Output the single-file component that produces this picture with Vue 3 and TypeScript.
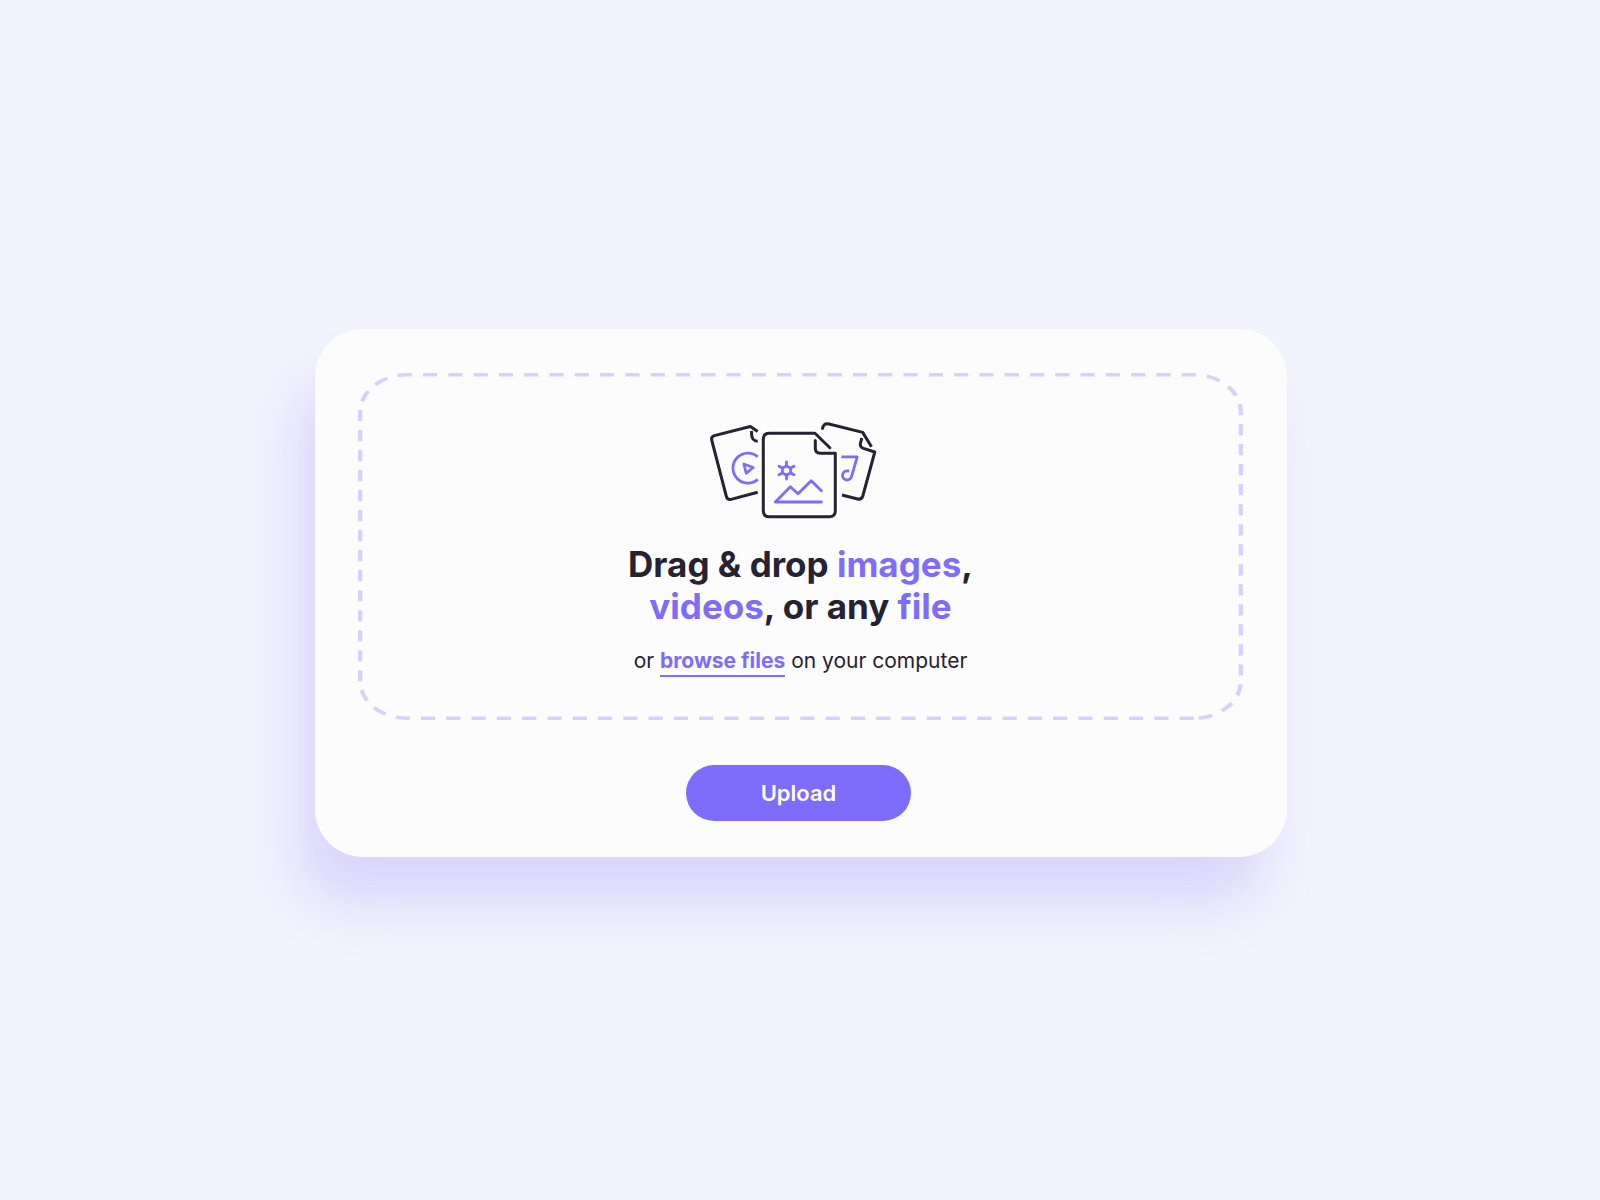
<script setup lang="ts">
import { ref } from 'vue'

const picker = ref<HTMLInputElement | null>(null)
const files = ref<File[]>([])

function browse(): void {
  picker.value?.click()
}

function onPick(event: Event): void {
  files.value = Array.from((event.target as HTMLInputElement).files ?? [])
}

function onDrop(event: DragEvent): void {
  files.value = Array.from(event.dataTransfer?.files ?? [])
}
</script>

<template>
  <main class="page">
    <section class="card">
      <div class="dropzone" @dragover.prevent @drop.prevent="onDrop">
        <svg class="outline" viewBox="0 0 701 347" preserveAspectRatio="none" aria-hidden="true">
          <path
            d="M662 345.3H39A37.3 37.3 0 0 1 1.7 308V39A37.3 37.3 0 0 1 39 1.7H662A37.3 37.3 0 0 1 699.3 39V308A37.3 37.3 0 0 1 662 345.3"
            pathLength="2015"
          />
        </svg>

        <svg class="files" viewBox="1 0 180 100" aria-hidden="true">
          <g class="ink">
            <path d="M47.7 11.4L40.3 6.5L4.4 15.6Q0.9 16.6 1.7 20L16.4 76.6Q17.4 80.2 21 79.4L47.7 72.2" />
            <path d="M41.6 11V14.5Q42 21 47.7 21.2" />
            <path stroke-linecap="round" d="M119.8 27.8L105 13.3H59.3Q53.3 13.3 53.3 19.3V90.7Q53.3 96.7 59.3 96.7H119.3Q125.3 96.7 125.3 90.7V33.3H110.3Q105.3 33.3 105.3 28.3V20.6" />
            <path d="M112.3 9.6Q113.2 2.6 119 4L152.7 12.4L161.5 26.8" />
            <path d="M151.9 18L150.4 23.4Q149.6 27 153.4 28.4L164.8 32L152.8 76Q151.6 79.8 147.6 79L132 75" />
          </g>
          <g class="accent">
            <path stroke-linecap="butt" d="M47.8 36.8A15 15 0 1 0 47.8 59.4" />
            <path d="M33.8 44L43.2 47.5L36.3 53.3Z" />
            <path d="M65.3 82L80.3 66.7L88 73.7L101.2 60.7L111.4 70.8M65.3 82H111.4" />
            <circle cx="76.5" cy="50.5" r="4.2" />
            <path d="M76.5 42V46M76.5 55V59M69 46.2L72.6 48.2M80.4 52.8L84 54.8M69 54.8L72.6 52.8M80.4 48.2L84 46.2" />
            <path stroke-linecap="butt" d="M131.4 36.8H147.2L141.6 56.4A4.6 4.6 0 1 1 137.4 50.8L139.2 51.2" />
          </g>
        </svg>

        <h1 class="title">
          Drag &amp; drop <em>images</em>,<br />
          <em>videos</em>, or any <em>file</em>
        </h1>
        <p class="hint">
          or <a href="#" @click.prevent="browse">browse files</a> on your computer
        </p>
        <input ref="picker" type="file" multiple hidden aria-label="Files" @change="onPick" />
      </div>

      <button class="upload" type="button">Upload</button>
    </section>
  </main>
</template>

<style>
body {
  margin: 0;
  background: #f3f3fd;
}
</style>

<style scoped>
.page {
  box-sizing: border-box;
  display: flex;
  align-items: center;
  justify-content: center;
  min-height: 100vh;
  padding: 24px 24px 38px 26px;
  color: #242233;
  font-family: Inter, "Liberation Sans", sans-serif;
}

.card {
  box-sizing: border-box;
  display: flex;
  flex-direction: column;
  align-items: center;
  width: 100%;
  max-width: 972px;
  padding: 44px 44px 36px 43px;
  border-radius: 48px;
  background: #fcfcfc;
  box-shadow: -20px 50px 56px -4px rgba(126, 108, 252, 0.22);
}

.dropzone {
  position: relative;
  box-sizing: border-box;
  display: flex;
  flex-direction: column;
  align-items: center;
  width: 100%;
  padding: 47px 24px 45px;
  text-align: center;
}

.outline {
  position: absolute;
  inset: 0;
  width: 100%;
  height: 100%;
  fill: none;
  stroke: #d7d0fb;
  stroke-width: 3.4;
  stroke-dasharray: 11.2 8.8;
  pointer-events: none;
}

.files {
  width: 180px;
  height: 100px;
  overflow: visible;
  fill: none;
  stroke-width: 3;
  stroke-linejoin: round;
}

.ink {
  stroke: #242233;
}

.accent {
  stroke: #7e6cfc;
  stroke-width: 2.8;
  stroke-linecap: round;
}

.title {
  position: relative;
  margin: 23px 0 0;
  font-size: 35px;
  font-weight: 700;
  line-height: 42px;
}

.title em {
  color: #7e6cfc;
  font-style: normal;
}

.hint {
  position: relative;
  margin: 20px 0 0;
  font-size: 21px;
  line-height: 28px;
}

.hint a {
  border-bottom: 2px solid #7e6cfc;
  padding-bottom: 2px;
  color: #7e6cfc;
  font-weight: 700;
  text-decoration: none;
}

.upload {
  width: 225px;
  height: 56px;
  margin: 45px 4px 0 0;
  border: 0;
  border-radius: 28px;
  background: #7e6cfc;
  color: #fcfcfc;
  font: inherit;
  font-size: 22px;
  font-weight: 600;
  cursor: pointer;
}
</style>
